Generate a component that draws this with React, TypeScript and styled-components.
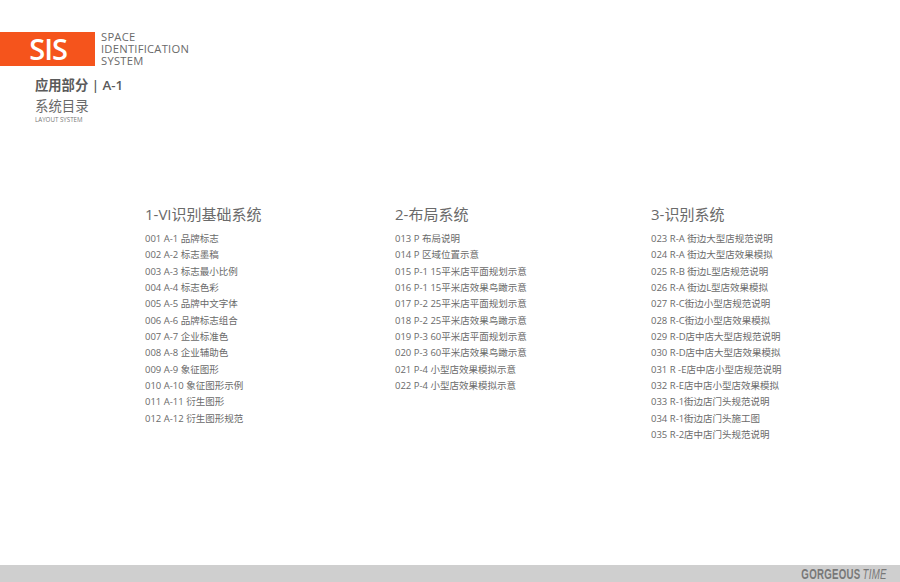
import React from 'react';
import styled, { createGlobalStyle } from 'styled-components';

const cjk = `"Open Sans", "Noto Sans CJK SC", sans-serif`;

const GlobalStyle = createGlobalStyle`
  html, body {
    margin: 0;
    padding: 0;
    background: #fff;
  }
`;

const Page = styled.div`
  width: 900px;
  height: 582px;
  overflow: hidden;
  display: flex;
  flex-direction: column;
  font-family: ${cjk};
  color: #5c5c5c;
`;

const Header = styled.header`
  padding-top: 32px;
  height: 175px;
  box-sizing: border-box;
  flex-shrink: 0;
`;

const Brand = styled.div`
  display: flex;
  align-items: center;
  height: 34px;
`;

const Logo = styled.div`
  width: 95px;
  height: 34px;
  background: #f5541c;
  color: #fff;
  font-family: "Open Sans", sans-serif;
  font-size: 29px;
  font-weight: 600;
  line-height: 34px;
  text-align: right;
  padding-right: 28px;
  box-sizing: border-box;
  letter-spacing: -1px;
`;

const BrandName = styled.div`
  margin-left: 6px;
  font-size: 11.2px;
  line-height: 12px;
  color: #6a6a6a;
  letter-spacing: 0.25px;
`;

const Section = styled.div`
  margin: 9px 0 0 35px;
`;

const SectionCode = styled.div`
  font-size: 13.3px;
  line-height: 20px;
  font-weight: 600;
  color: #5a5a5a;
`;

const SectionTitle = styled.div`
  margin-top: 2px;
  font-size: 13.4px;
  line-height: 18px;
  color: #6a6a6a;
`;

const SectionSub = styled.div`
  font-size: 6.2px;
  line-height: 8px;
  margin-top: 1px;
  color: #777;
`;

const Columns = styled.main`
  flex: 1;
  display: grid;
  grid-template-columns: 250px 256px 1fr;
  padding: 28px 0 0 145px;
`;

const Heading = styled.h2`
  margin: 0 0 6px;
  font-size: 15px;
  line-height: 22px;
  font-weight: 400;
  color: #6a6a6a;
`;

const Items = styled.ul`
  margin: 0;
  padding: 0;
  list-style: none;
`;

const Item = styled.li`
  font-size: 9.5px;
  line-height: 16.33px;
  white-space: nowrap;
  color: #6a6a6a;
`;

const Footer = styled.footer`
  height: 17px;
  flex-shrink: 0;
  background: #cfcfcf;
  display: flex;
  justify-content: flex-end;
  align-items: center;
  padding-right: 13px;
`;

const FooterMark = styled.div`
  font-family: "Liberation Sans", sans-serif;
  font-size: 14px;
  font-weight: 700;
  color: #787878;
  letter-spacing: 0.4px;
  transform: scaleX(0.69);
  transform-origin: right center;
  white-space: nowrap;
`;

const FooterItalic = styled.span`
  font-style: italic;
  font-weight: 400;
  margin-left: 3px;
`;

const columns = [
  {
    title: '1-VI识别基础系统',
    items: [
      '001 A-1 品牌标志',
      '002 A-2 标志墨稿',
      '003 A-3 标志最小比例',
      '004 A-4 标志色彩',
      '005 A-5 品牌中文字体',
      '006 A-6 品牌标志组合',
      '007 A-7 企业标准色',
      '008 A-8 企业辅助色',
      '009 A-9 象征图形',
      '010 A-10 象征图形示例',
      '011 A-11 衍生图形',
      '012 A-12 衍生图形规范',
    ],
  },
  {
    title: '2-布局系统',
    items: [
      '013 P 布局说明',
      '014 P 区域位置示意',
      '015 P-1 15平米店平面规划示意',
      '016 P-1 15平米店效果鸟瞰示意',
      '017 P-2 25平米店平面规划示意',
      '018 P-2 25平米店效果鸟瞰示意',
      '019 P-3 60平米店平面规划示意',
      '020 P-3 60平米店效果鸟瞰示意',
      '021 P-4 小型店效果模拟示意',
      '022 P-4 小型店效果模拟示意',
    ],
  },
  {
    title: '3-识别系统',
    items: [
      '023 R-A 街边大型店规范说明',
      '024 R-A 街边大型店效果模拟',
      '025 R-B 街边L型店规范说明',
      '026 R-A 街边L型店效果模拟',
      '027 R-C街边小型店规范说明',
      '028 R-C街边小型店效果模拟',
      '029 R-D店中店大型店规范说明',
      '030 R-D店中店大型店效果模拟',
      '031 R -E店中店小型店规范说明',
      '032 R-E店中店小型店效果模拟',
      '033 R-1街边店门头规范说明',
      '034 R-1街边店门头施工图',
      '035 R-2店中店门头规范说明',
    ],
  },
];

export default function App() {
  return (
    <>
      <GlobalStyle />
      <Page>
        <Header>
          <Brand>
            <Logo>SIS</Logo>
            <BrandName>
              SPACE
              <br />
              IDENTIFICATION
              <br />
              SYSTEM
            </BrandName>
          </Brand>
          <Section>
            <SectionCode>应用部分 | A-1</SectionCode>
            <SectionTitle>系统目录</SectionTitle>
            <SectionSub>LAYOUT SYSTEM</SectionSub>
          </Section>
        </Header>

        <Columns>
          {columns.map(col => (
            <section key={col.title}>
              <Heading>{col.title}</Heading>
              <Items>
                {col.items.map(item => (
                  <Item key={item}>{item}</Item>
                ))}
              </Items>
            </section>
          ))}
        </Columns>

        <Footer>
          <FooterMark>
            GORGEOUS<FooterItalic>TIME</FooterItalic>
          </FooterMark>
        </Footer>
      </Page>
    </>
  );
}
